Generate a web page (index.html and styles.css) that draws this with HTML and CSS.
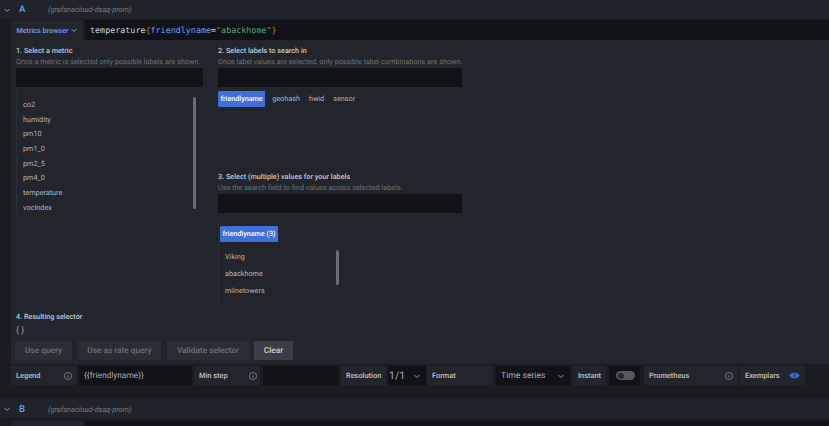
FILE: index.html
```html
<!DOCTYPE html>
<html lang="en">
<head>
    <meta charset="UTF-8">
    <title>Query editor</title>
    <link rel="stylesheet" href="styles.css">
</head>
<body>
    <div class="query-header">
        <svg class="chevron" viewBox="0 0 8 8"><path d="M1.5 3 L4 5.5 L6.5 3" /></svg>
        <span class="query-letter">A</span>
        <span class="datasource">(grafanacloud-dsaq-prom)</span>
    </div>

    <div class="query-body">
        <div class="query-line">
            <button class="metrics-button">Metrics browser
                <svg class="chevron blue" viewBox="0 0 8 8"><path d="M1.5 3 L4 5.5 L6.5 3" /></svg>
            </button>
            <div class="code-input">temperature<span class="brace">{</span><span class="attr">friendlyname</span>=<span class="str">"abackhome"</span><span class="brace">}</span></div>
        </div>

        <div class="browser">
            <div class="browser-top">
                <div class="col-metric">
                    <div class="step-title">1. Select a metric</div>
                    <div class="step-desc">Once a metric is selected only possible labels are shown.</div>
                    <div class="search"></div>
                    <div class="metric-list">
                        <ul>
                            <li>co2</li>
                            <li>humidity</li>
                            <li>pm10</li>
                            <li>pm1_0</li>
                            <li>pm2_5</li>
                            <li>pm4_0</li>
                            <li>temperature</li>
                            <li>vocIndex</li>
                        </ul>
                        <div class="scrollbar metric-scroll"></div>
                    </div>
                </div>

                <div class="col-labels">
                    <div class="step-title">2. Select labels to search in</div>
                    <div class="step-desc">Once label values are selected, only possible label combinations are shown.</div>
                    <div class="search"></div>
                    <div class="label-chips">
                        <span class="chip active">friendlyname</span>
                        <span class="chip">geohash</span>
                        <span class="chip">hwid</span>
                        <span class="chip">sensor</span>
                    </div>

                    <div class="step-title values-title">3. Select (multiple) values for your labels</div>
                    <div class="step-desc">Use the search field to find values across selected labels.</div>
                    <div class="search"></div>
                    <div class="value-list">
                        <span class="chip active">friendlyname (3)</span>
                        <ul>
                            <li>Viking</li>
                            <li>abackhome</li>
                            <li>milnetowers</li>
                        </ul>
                        <div class="scrollbar value-scroll"></div>
                    </div>
                </div>
            </div>

            <div class="step-title result-title">4. Resulting selector</div>
            <div class="selector">{ }</div>
            <div class="actions">
                <button class="action w-use">Use query</button>
                <button class="action w-rate">Use as rate query</button>
                <button class="action w-validate">Validate selector</button>
                <button class="action clear">Clear</button>
            </div>
        </div>

        <div class="options">
            <div class="opt-label w-legend">Legend <svg class="info" viewBox="0 0 10 10"><circle cx="5" cy="5" r="3.6" /><path d="M5 4.6 V7 M5 3 V3.6" /></svg></div>
            <div class="opt-input w-legend-input">{{friendlyname}}</div>
            <div class="opt-label w-step">Min step <svg class="info" viewBox="0 0 10 10"><circle cx="5" cy="5" r="3.6" /><path d="M5 4.6 V7 M5 3 V3.6" /></svg></div>
            <div class="opt-input w-step-input"></div>
            <div class="opt-label w-res">Resolution</div>
            <div class="opt-input w-res-select">1/1 <svg class="chevron" viewBox="0 0 8 8"><path d="M1.5 3 L4 5.5 L6.5 3" /></svg></div>
            <div class="opt-label w-format">Format</div>
            <div class="opt-input w-format-select">Time series <svg class="chevron" viewBox="0 0 8 8"><path d="M1.5 3 L4 5.5 L6.5 3" /></svg></div>
            <div class="opt-label w-instant">Instant</div>
            <div class="opt-input w-toggle"><span class="toggle"><span class="knob"></span></span></div>
            <div class="opt-label w-prom">Prometheus <svg class="info" viewBox="0 0 10 10"><circle cx="5" cy="5" r="3.6" /><path d="M5 4.6 V7 M5 3 V3.6" /></svg></div>
            <div class="opt-label w-exemplars">Exemplars <svg class="eye" viewBox="0 0 12 10"><path d="M0.5 5 C2.5 1.2 9.5 1.2 11.5 5 C9.5 8.8 2.5 8.8 0.5 5 Z" /><circle cx="6" cy="5" r="1.6" /></svg></div>
        </div>
    </div>

    <div class="query-header second">
        <svg class="chevron" viewBox="0 0 8 8"><path d="M1.5 3 L4 5.5 L6.5 3" /></svg>
        <span class="query-letter">B</span>
        <span class="datasource">(grafanacloud-dsaq-prom)</span>
    </div>
    <div class="query-line next">
        <div class="metrics-button blank"></div>
        <div class="code-input"></div>
    </div>
</body>
</html>
```

FILE: styles.css
```css
html, body {
    height: 100%;
}

body {
    margin: 0;
    overflow: hidden;
    background-color: #1a1c21;
    color: #c7c9cf;
    font-family: Roboto, "Liberation Sans", sans-serif;
    font-size: 7.25px;
    text-rendering: geometricPrecision;
}

ul {
    list-style: none;
    margin: 0;
    padding: 0;
}

button {
    border: none;
    font-family: inherit;
    text-rendering: inherit;
}

.query-header {
    display: flex;
    align-items: center;
    height: 19px;
    background-color: #20232a;
}

.query-header.second {
    box-sizing: border-box;
    padding-top: 1px;
}

.chevron {
    width: 8px;
    height: 8px;
    flex: none;
    fill: none;
    stroke: #9a9ca3;
    stroke-width: 1;
}

.query-header .chevron {
    margin-left: 3px;
}

.query-letter {
    width: 29px;
    margin-left: 8px;
    color: #6e9fff;
    font-size: 9.5px;
    font-weight: 500;
}

.datasource {
    color: #7b7e85;
    font-size: 7.4px;
    font-style: italic;
}

.query-body {
    margin-left: 11px;
    padding-top: 1px;
}

.query-line {
    display: flex;
    gap: 2px;
    height: 20px;
}

.query-line.next {
    margin: 3px 0 0 11px;
}

.metrics-button {
    display: flex;
    align-items: center;
    justify-content: center;
    width: 72px;
    padding: 0;
    background-color: #22252b;
    color: #6e9fff;
    font-size: 7.2px;
    font-weight: 500;
}

.chevron.blue {
    stroke: #6e9fff;
    margin-left: 1px;
}

.code-input {
    flex: 1;
    padding-left: 5px;
    background-color: #111217;
    color: #d0d1d5;
    font-family: "DejaVu Sans Mono", "Liberation Mono", monospace;
    font-size: 8.4px;
    line-height: 20px;
}

.brace {
    color: #c9852f;
}

.attr {
    color: #6e9fff;
}

.str {
    color: #5aa46c;
}

.browser {
    height: 324px;
    padding: 4px 5px 0;
    box-sizing: border-box;
    background-color: #22252b;
}

.browser-top {
    display: flex;
    gap: 15px;
    height: 264px;
}

.col-metric {
    width: 187px;
}

.col-labels {
    width: 244px;
}

.step-title {
    height: 12px;
    color: #c7c9cf;
    font-size: 7.25px;
    font-weight: 500;
    line-height: 13px;
}

.step-desc {
    height: 12px;
    color: #6f7278;
    font-size: 7.3px;
    line-height: 11px;
    white-space: nowrap;
}

.search {
    height: 19px;
    background-color: #111217;
}

.metric-list {
    position: relative;
    height: 128px;
    margin-top: 3px;
    padding-left: 6px;
    border-left: 1px solid #2c2f36;
}

.metric-list ul {
    padding-top: 8px;
}

.metric-list li {
    height: 14.7px;
    color: #b4b6bc;
    line-height: 14.7px;
}

.scrollbar {
    position: absolute;
    width: 3px;
    border-radius: 2px;
    background-color: #6b6d72;
}

.metric-scroll {
    top: 7px;
    left: 176px;
    height: 112px;
}

.label-chips {
    display: flex;
    gap: 9px;
    margin-top: 4px;
}

.chip {
    height: 16px;
    color: #b4b6bc;
    line-height: 16px;
    white-space: nowrap;
}

.chip.active {
    display: inline-block;
    padding: 0 2.5px;
    border-radius: 1px;
    background-color: #3d71d9;
    color: #ffffff;
    font-size: 7.2px;
    font-weight: 500;
}

.label-chips .chip.active {
    margin-right: -2px;
}

.values-title {
    margin-top: 63px;
}

.value-list {
    position: relative;
    height: 78px;
    margin-top: 7px;
    padding: 6px 0 0 1px;
    border-left: 1px solid #2c2f36;
}

.value-list .chip.active {
    display: block;
    width: 53px;
}

.value-list ul {
    padding: 7px 0 0 5px;
}

.value-list li {
    height: 16.8px;
    color: #b4b6bc;
    line-height: 16.8px;
}

.value-scroll {
    top: 30px;
    left: 117px;
    height: 35px;
}

.result-title {
    margin-top: 2px;
}

.selector {
    height: 13px;
    margin-top: 3px;
    color: #9a9ca2;
    font-size: 9px;
    line-height: 13px;
}

.actions {
    display: flex;
    gap: 6px;
    margin: 3px 0 0 -1px;
}

.action {
    height: 19px;
    padding: 0;
    background-color: #2a2d33;
    color: #6f7278;
    font-size: 8.3px;
    font-weight: 500;
}

.action.clear {
    width: 39px;
    margin-left: -1px;
    background-color: #3a3d44;
    color: #d0d1d5;
}

.w-use {
    width: 57px;
}

.w-rate {
    width: 83px;
}

.w-validate {
    width: 82px;
}

.options {
    display: flex;
    align-items: flex-start;
    gap: 2px;
    height: 35px;
    padding: 2px 0 0 11px;
    box-sizing: border-box;
    margin-left: -11px;
    background-color: #1a1c21;
}

.opt-label {
    display: flex;
    align-items: center;
    justify-content: space-between;
    flex: none;
    height: 19px;
    padding: 0 5px;
    box-sizing: border-box;
    background-color: #22252b;
    color: #c0c2c8;
    font-size: 7.4px;
    font-weight: 500;
}

.opt-input {
    display: flex;
    align-items: center;
    justify-content: space-between;
    flex: none;
    height: 19px;
    padding: 0 5px;
    box-sizing: border-box;
    background-color: #111217;
    color: #a9abb1;
    font-size: 8.4px;
}

.info {
    width: 10px;
    height: 10px;
    margin-right: -1px;
    fill: none;
    stroke: #85878d;
    stroke-width: 0.8;
}

.eye {
    width: 11px;
    height: 9px;
    fill: #3d71d9;
    stroke: #3d71d9;
    stroke-width: 0.6;
}

.eye circle {
    fill: #2a4a8a;
    stroke: none;
}

.w-legend {
    width: 66px;
}

.w-legend-input {
    width: 113px;
}

.w-step {
    width: 66px;
}

.w-step .info {
    margin-right: -3px;
}

.w-step-input {
    width: 76px;
    margin-left: 1px;
}

.w-res {
    width: 45px;
}

.w-res-select {
    width: 38px;
    padding-left: 1px;
    font-size: 10.5px;
}

.w-format {
    width: 66px;
    margin-left: -1px;
}

.w-format-select {
    width: 74px;
    margin-left: 1px;
    font-size: 8.6px;
}

.w-instant {
    width: 33px;
    margin-left: 1px;
}

.w-toggle {
    width: 31px;
    margin-left: 1px;
    justify-content: center;
    padding: 0 0 0 2px;
}

.toggle {
    display: block;
    position: relative;
    width: 19px;
    height: 9px;
    border-radius: 5px;
    background-color: #55575c;
}

.knob {
    position: absolute;
    top: 1.5px;
    left: 2px;
    width: 6px;
    height: 6px;
    border-radius: 50%;
    background-color: #26282d;
}

.w-prom {
    width: 94px;
    margin-left: 2px;
}

.w-exemplars {
    width: 65px;
}
```
